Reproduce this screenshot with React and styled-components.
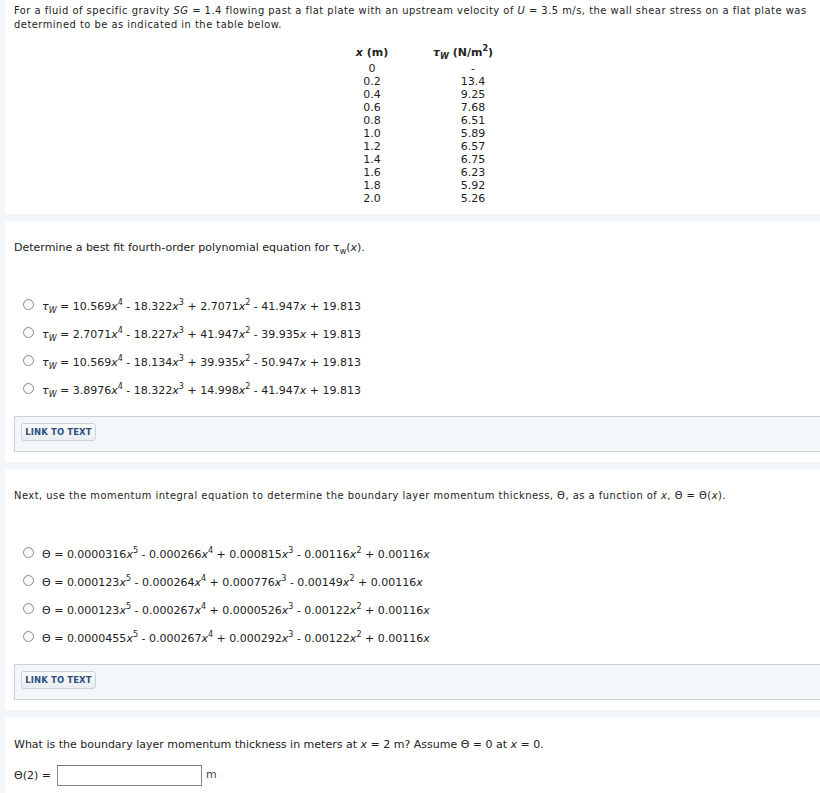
import React from "react";
import styled, { createGlobalStyle } from "styled-components";

const GlobalStyle = createGlobalStyle`
  html, body {
    margin: 0;
    padding: 0;
    background: #f4f7fa;
    overflow: hidden;
  }
  body {
    font-family: "DejaVu Sans", Verdana, sans-serif;
    font-size: 11px;
    color: #222;
  }
`;

const Page = styled.div`
  display: flex;
  flex-direction: column;
  gap: 7px;
  padding-left: 5px;
  margin-right: -20px;
`;

const Card = styled.section`
  background: #fff;
  padding: ${(p) => p.$pad || "20px 0 10px 9px"};
`;

const Narrow = styled.p`
  margin: 0;
  font-family: "DejaVu Sans Condensed", "DejaVu Sans", sans-serif;
  font-stretch: condensed;
  font-size: 11px;
  letter-spacing: 0.5px;
  line-height: 14px;
  padding-right: 25px;
`;

const Prompt = styled.p`
  margin: 0;
  line-height: 14px;
`;

const DataTable = styled.div`
  display: grid;
  grid-template-columns: 64px 138px;
  margin: 14px 0 0 326px;
  line-height: 13px;
  text-align: center;
`;

const HeadCell = styled.div`
  font-weight: bold;
  font-size: 11px;
  margin-bottom: 3px;
  padding-right: ${(p) => (p.$shift ? "20px" : "0")};
`;

const Cell = styled.div``;

const Options = styled.div`
  display: flex;
  flex-direction: column;
  gap: 14px;
  margin-top: 45px;
  padding-left: 9px;
`;

const Option = styled.label`
  display: flex;
  align-items: center;
  gap: 8px;
  height: 14px;
  line-height: 14px;
  white-space: nowrap;
`;

const Radio = styled.input.attrs({ type: "radio" })`
  appearance: none;
  margin: -5px 0 0 0;
  width: 11px;
  height: 11px;
  border: 1px solid #8a8a8a;
  border-radius: 50%;
  background: linear-gradient(#f3f3f3, #fff);
  flex: none;
`;

const Sup = styled.sup`
  font-size: 8px;
  line-height: 0;
  vertical-align: 5px;
`;

const Sub = styled.sub`
  font-size: 8px;
  line-height: 0;
  vertical-align: -3px;
`;

const LinkBox = styled.div`
  margin-top: 18px;
  height: 36px;
  background: #f4f7fa;
  border: 1px solid #c9d1dc;
  border-right: none;
  padding: 6px 0 0 6px;
  box-sizing: border-box;
`;

const LinkButton = styled.button`
  display: block;
  width: 75px;
  height: 18px;
  padding: 0;
  border: 1px solid #cdd3dc;
  border-radius: 3px;
  background: linear-gradient(#fbfcfd, #e9edf2);
  color: #2e4f7f;
  font-family: "DejaVu Sans", Verdana, sans-serif;
  font-weight: bold;
  font-size: 8.5px;
  letter-spacing: 0.1px;
`;

const AnswerRow = styled.div`
  display: flex;
  align-items: center;
  gap: 6px;
  margin-top: 13px;
`;

const AnswerInput = styled.input`
  width: 145px;
  height: 21px;
  box-sizing: border-box;
  border: 1px solid #888;
  border-top-color: #777;
  background: #fff;
`;

const Unit = styled.span`
  color: #444;
  margin: -3px 0 0 -2px;
`;

const T = () => (
  <span>
    <i>τ</i>
    <Sub>
      <i>W</i>
    </Sub>
  </span>
);

const xs = ["0", "0.2", "0.4", "0.6", "0.8", "1.0", "1.2", "1.4", "1.6", "1.8", "2.0"];
const taus = ["-", "13.4", "9.25", "7.68", "6.51", "5.89", "6.57", "6.75", "6.23", "5.92", "5.26"];

const tauOptions = [
  ["10.569", "18.322", "2.7071", "41.947"],
  ["2.7071", "18.227", "41.947", "39.935"],
  ["10.569", "18.134", "39.935", "50.947"],
  ["3.8976", "18.322", "14.998", "41.947"],
];

const thetaOptions = [
  ["0.0000316", "0.000266", "0.000815", "0.00116"],
  ["0.000123", "0.000264", "0.000776", "0.00149"],
  ["0.000123", "0.000267", "0.0000526", "0.00122"],
  ["0.0000455", "0.000267", "0.000292", "0.00122"],
];

const X = () => <i>x</i>;

export default function App() {
  return (
    <>
      <GlobalStyle />
      <Page>
        <Card $pad="4px 0 9px 9px">
          <Narrow>
            For a fluid of specific gravity <i>SG</i> = 1.4 flowing past a flat plate with an
            upstream velocity of <i>U</i> = 3.5 m/s, the wall shear stress on a flat plate was
            determined to be as indicated in the table below.
          </Narrow>
          <DataTable>
            <HeadCell>
              <X /> (m)
            </HeadCell>
            <HeadCell $shift>
              <T /> (N/m<Sup>2</Sup>)
            </HeadCell>
            {xs.map((x, i) => (
              <React.Fragment key={x}>
                <Cell>{x}</Cell>
                <Cell>{taus[i]}</Cell>
              </React.Fragment>
            ))}
          </DataTable>
        </Card>

        <Card>
          <Prompt>
            Determine a best fit fourth-order polynomial equation for τ<Sub>w</Sub>(<X />).
          </Prompt>
          <Options>
            {tauOptions.map((o, i) => (
              <Option key={i}>
                <Radio name="tau" />
                <span>
                  <T /> = {o[0]}
                  <X />
                  <Sup>4</Sup> - {o[1]}
                  <X />
                  <Sup>3</Sup> + {o[2]}
                  <X />
                  <Sup>2</Sup> - {o[3]}
                  <X /> + 19.813
                </span>
              </Option>
            ))}
          </Options>
          <LinkBox>
            <LinkButton>LINK TO TEXT</LinkButton>
          </LinkBox>
        </Card>

        <Card>
          <Narrow>
            Next, use the momentum integral equation to determine the boundary layer momentum
            thickness, Θ, as a function of <X />, Θ = Θ(<X />).
          </Narrow>
          <Options>
            {thetaOptions.map((o, i) => (
              <Option key={i}>
                <Radio name="theta" />
                <span>
                  Θ = {o[0]}
                  <X />
                  <Sup>5</Sup> - {o[1]}
                  <X />
                  <Sup>4</Sup> + {o[2]}
                  <X />
                  <Sup>3</Sup> - {o[3]}
                  <X />
                  <Sup>2</Sup> + 0.00116
                  <X />
                </span>
              </Option>
            ))}
          </Options>
          <LinkBox>
            <LinkButton>LINK TO TEXT</LinkButton>
          </LinkBox>
        </Card>

        <Card $pad="21px 0 20px 9px">
          <Prompt>
            What is the boundary layer momentum thickness in meters at <X /> = 2 m? Assume Θ = 0
            at <X /> = 0.
          </Prompt>
          <AnswerRow>
            <span>Θ(2) =</span>
            <AnswerInput />
            <Unit>m</Unit>
          </AnswerRow>
        </Card>
      </Page>
    </>
  );
}
